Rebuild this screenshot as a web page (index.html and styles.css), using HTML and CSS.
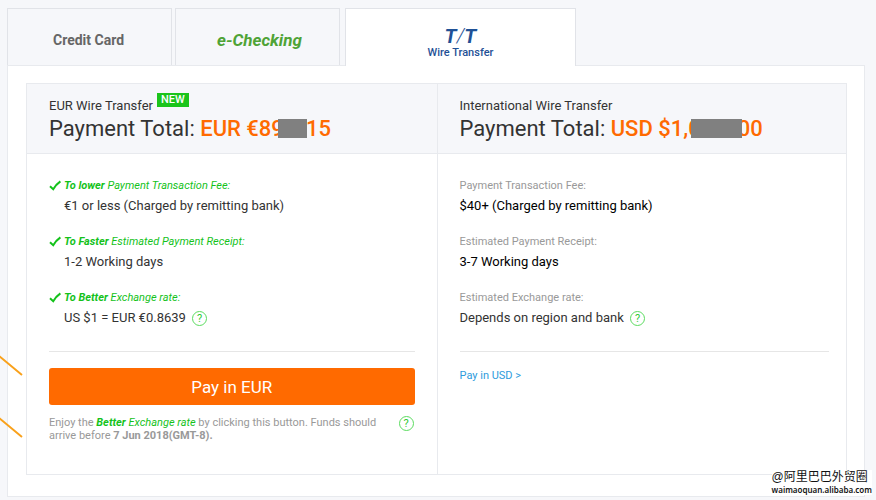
FILE: index.html
```html
<!DOCTYPE html>
<html lang="en">
<head>
    <meta charset="UTF-8">
    <title>Wire Transfer</title>
    <link rel="stylesheet" href="styles.css">
</head>
<body>
    <div class="page">
        <div class="tabs">
            <button class="tab" type="button">Credit Card</button>
            <button class="tab tab-checking" type="button">e-Checking</button>
            <button class="tab tab-active" type="button">
                <span class="tt-logo">T<i>/</i>T</span>
                <span class="tt-name">Wire Transfer</span>
            </button>
        </div>
        <div class="panel">
            <div class="compare">
                <section class="plan">
                    <header class="plan-header">
                        <div class="plan-name">EUR Wire Transfer <span class="new">NEW</span></div>
                        <h2 class="total">Payment Total: <strong>EUR €89<span class="mask"></span>15</strong></h2>
                    </header>
                    <div class="plan-body">
                        <dl class="fees fees-eur">
                            <dt><svg class="check" viewBox="0 0 12 11"><path d="M1 6.2 L4.2 9.2 Q7 4.5 11.4 1.4"/></svg><b>To lower</b> Payment Transaction Fee:</dt>
                            <dd>€1 or less (Charged by remitting bank)</dd>
                            <dt><svg class="check" viewBox="0 0 12 11"><path d="M1 6.2 L4.2 9.2 Q7 4.5 11.4 1.4"/></svg><b>To Faster</b> Estimated Payment Receipt:</dt>
                            <dd>1-2 Working days</dd>
                            <dt><svg class="check" viewBox="0 0 12 11"><path d="M1 6.2 L4.2 9.2 Q7 4.5 11.4 1.4"/></svg><b>To Better</b> Exchange rate:</dt>
                            <dd>US $1 = EUR €0.8639 <button class="help" type="button">?</button></dd>
                        </dl>
                        <div class="action">
                            <button class="pay" type="button">Pay in EUR</button>
                            <div class="note">
                                <p>Enjoy the <em><b>Better</b> Exchange rate</em> by clicking this button. Funds should arrive before <b>7 Jun 2018(GMT-8).</b></p>
                                <button class="help" type="button">?</button>
                            </div>
                        </div>
                    </div>
                </section>
                <section class="plan">
                    <header class="plan-header">
                        <div class="plan-name">International Wire Transfer</div>
                        <h2 class="total">Payment Total: <strong>USD $1,0<span class="mask mask-wide"></span>00</strong></h2>
                    </header>
                    <div class="plan-body">
                        <dl class="fees">
                            <dt>Payment Transaction Fee:</dt>
                            <dd class="strong">$40+ (Charged by remitting bank)</dd>
                            <dt>Estimated Payment Receipt:</dt>
                            <dd class="strong">3-7 Working days</dd>
                            <dt>Estimated Exchange rate:</dt>
                            <dd>Depends on region and bank <button class="help" type="button">?</button></dd>
                        </dl>
                        <div class="action">
                            <a class="pay-link" href="#">Pay in USD &gt;</a>
                        </div>
                    </div>
                </section>
            </div>
        </div>
        <svg class="pointers" viewBox="0 0 24 84"><path d="M-1 1 L22 20 M-1 63 L22 82"/></svg>
        <div class="watermark">
            <div class="watermark-name">@阿里巴巴外贸圈</div>
            <div class="watermark-site">waimaoquan.alibaba.com</div>
        </div>
    </div>
</body>
</html>
```

FILE: styles.css
```css
* {
    box-sizing: border-box;
}
body {
    margin: 0;
    background: #f6f7fa;
    color: #333;
    font-family: Roboto, "Liberation Sans", sans-serif;
    font-size: 13px;
}
button {
    font-family: inherit;
    cursor: pointer;
}
.page {
    position: relative;
    padding: 8px 11px 3px 7px;
}
.tabs {
    display: flex;
    gap: 3px;
}
.tab {
    width: 165px;
    height: 57px;
    padding: 5px 2px 0 0;
    background: #f6f7fa;
    border: 1px solid #e1e3e8;
    border-bottom: none;
    color: #666;
    font-size: 14px;
    font-weight: bold;
}
.tab-checking {
    padding: 5px 0 0 4px;
    color: #4fa336;
    font-size: 17px;
    font-style: italic;
}
.tab-active {
    display: flex;
    flex-direction: column;
    align-items: center;
    justify-content: center;
    width: 231px;
    height: 58px;
    margin: 0 0 -1px 2px;
    padding: 9px 0 0;
    background: #fff;
    color: #1f5196;
    z-index: 1;
}
.tt-logo {
    font-size: 20px;
    font-style: italic;
    line-height: 20px;
}
.tt-logo i {
    font-weight: 300;
}
.tt-name {
    font-size: 11px;
    font-weight: 500;
    line-height: 13px;
}
.panel {
    padding: 17px 17px 21px 18px;
    background: #fff;
    border: 1px solid #e8eaee;
}
.compare {
    display: grid;
    grid-template-columns: 1fr 1fr;
    border: 1px solid #e8eaee;
}
.plan + .plan {
    border-left: 1px solid #e8eaee;
}
.plan-header {
    height: 70px;
    padding: 13px 22px 0;
    background: #f6f7fa;
    border-bottom: 1px solid #e8eaee;
}
.plan-name {
    display: flex;
    gap: 4px;
    height: 17px;
    font-size: 13px;
    line-height: 17px;
}
.new {
    height: 14px;
    margin-top: -4px;
    padding: 0 4px;
    background: #1bc41b;
    color: #fff;
    font-size: 11px;
    font-weight: 500;
    line-height: 14px;
}
.total {
    margin: 0;
    font-size: 22px;
    font-weight: normal;
    line-height: 30px;
}
.total strong {
    color: #ff6a00;
    font-weight: 500;
}
.mask {
    position: relative;
    display: inline-block;
    width: 29px;
    height: 19px;
    margin: 0 -1px 0 -6px;
    background: #808080;
    vertical-align: -2px;
}
.mask-wide {
    width: 51px;
    margin: 0 -4px 0 -10px;
}
.plan-body {
    padding: 24px 17px 32px 22px;
}
.plan:first-child .plan-body {
    padding-right: 22px;
}
.fees {
    margin: 0;
    padding-bottom: 21px;
    border-bottom: 1px solid #e6e6e6;
}
.fees dt {
    color: #999;
    font-size: 11px;
    line-height: 16px;
}
.fees dd {
    margin: 0 0 16px;
    line-height: 24px;
}
.fees dd:last-child {
    margin-bottom: 0;
}
.fees .strong {
    color: #000;
}
.fees-eur dt {
    color: #14c21b;
    font-style: italic;
}
.fees-eur dd {
    padding-left: 15px;
}
.check {
    width: 12px;
    height: 11px;
    margin-right: 3px;
    fill: none;
    stroke: #14c21b;
    stroke-width: 2;
    vertical-align: -2px;
}
.help {
    width: 15px;
    height: 15px;
    margin-left: 3px;
    padding: 0;
    background: none;
    border: 1px solid #5bdc5f;
    border-radius: 50%;
    color: #2fc934;
    font-size: 11px;
    line-height: 13px;
    text-align: center;
    vertical-align: middle;
}
.action {
    padding-top: 16px;
    line-height: 13px;
}
.pay {
    width: 100%;
    height: 37px;
    background: #ff6a00;
    border: none;
    border-radius: 3px;
    color: #fff;
    font-size: 17px;
}
.pay-link {
    color: #2e9bdc;
    font-size: 11px;
    text-decoration: none;
}
.note {
    display: flex;
    justify-content: space-between;
    align-items: flex-start;
    padding-top: 11px;
    color: #999;
    font-size: 11px;
    line-height: 13px;
}
.note p {
    max-width: 340px;
    margin: 0;
}
.note em {
    color: #14c21b;
}
.note .help {
    flex: none;
    margin-right: 1px;
}
.pointers {
    position: absolute;
    top: 355px;
    left: 0;
    width: 24px;
    height: 84px;
    fill: none;
    stroke: #f9a11b;
    stroke-width: 2;
}
.watermark {
    position: absolute;
    right: 4px;
    bottom: 5px;
    background: #fff;
    color: #111;
}
.watermark-name {
    font-family: "Liberation Sans", "Noto Sans CJK SC", sans-serif;
    font-size: 12px;
    line-height: 15px;
}
.watermark-site {
    font-family: "Noto Sans", sans-serif;
    font-size: 8px;
    font-weight: 600;
    line-height: 10px;
}
```
